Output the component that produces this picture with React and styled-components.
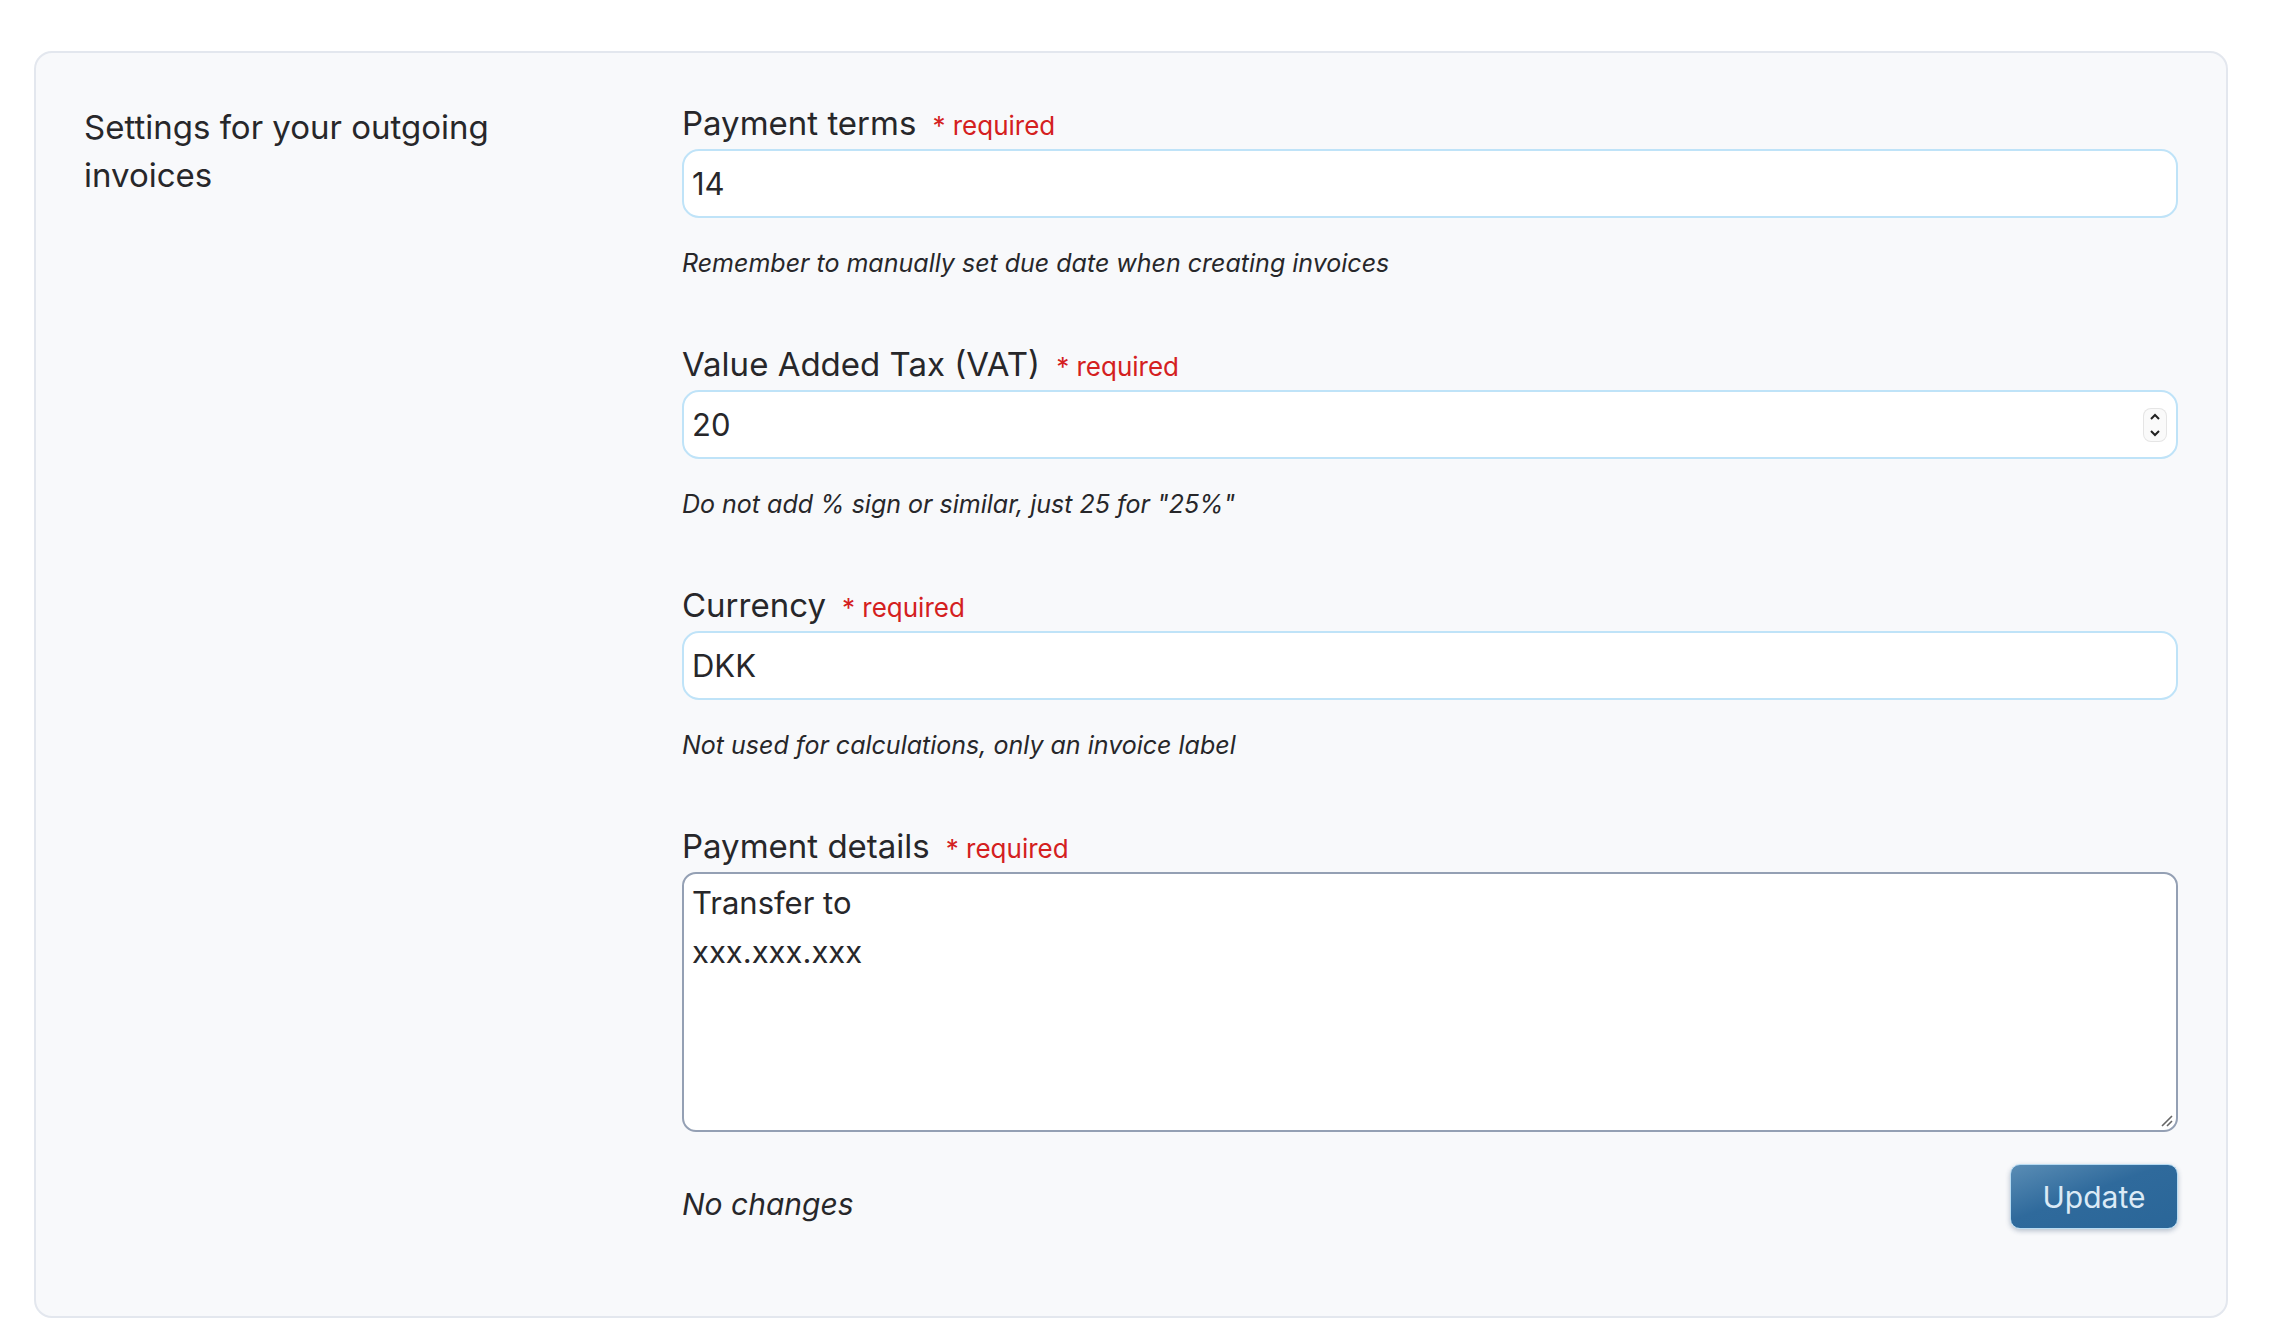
import React from "react";
import styled, {createGlobalStyle} from "styled-components";

const Global = createGlobalStyle`
  body { margin: 0; background: #fff; font-family: Inter, "Noto Sans", sans-serif; color: #27272a; }
`;

const Card = styled.div`
  margin: 51px 40px 0 34px;
  width: 2194px;
  box-sizing: border-box;
  height: 1267px;
  background: #f8f9fb;
  border: 2px solid #e3e7ee;
  border-radius: 18px;
  padding: 50px 48px 0 48px;
  display: grid;
  grid-template-columns: 598px 1fr;
`;

const Title = styled.div`
  font-size: 33px;
  line-height: 48px;
  width: 440px;
`;

const Fields = styled.div`
  display: flex;
  flex-direction: column;
`;

const Field = styled.div`
  display: flex;
  flex-direction: column;
  margin-bottom: ${p => p.gap || 0}px;
`;

const Label = styled.div`
  display: flex;
  align-items: baseline;
  gap: 16px;
  font-size: 33px;
  height: 46px;
`;

const Req = styled.span`
  color: #d42020;
  font-size: 26px;
`;

const InputBox = styled.div`
  height: 69px;
  box-sizing: border-box;
  background: #fff;
  border: 2px solid #bfe3f8;
  border-radius: 17px;
  display: flex;
  align-items: center;
  justify-content: space-between;
  padding: 0 10px 0 8px;
  font-size: 31px;
`;

const Spinner = styled.div`
  width: 22px;
  height: 32px;
  border-radius: 7px;
  background: #fafafa;
  box-shadow: 0 0 0 1px #e5e5e5;
  display: flex;
  flex-direction: column;
  align-items: center;
  justify-content: space-around;
`;

const Help = styled.div`
  font-style: italic;
  font-size: 25px;
  margin-top: 30px;
  height: 36px;
`;

const TextArea = styled.div`
  height: 260px;
  box-sizing: border-box;
  background: #fff;
  border: 2px solid #94a0b4;
  border-radius: 14px;
  padding: 4px 8px;
  font-size: 31px;
  line-height: 49px;
  position: relative;
`;

const Grip = styled.svg`
  position: absolute;
  right: 3px;
  bottom: 3px;
`;

const Footer = styled.div`
  display: flex;
  justify-content: space-between;
  align-items: flex-start;
  margin-top: 50px;
`;

const Status = styled.div`
  font-style: italic;
  font-size: 30px;
  margin-top: 4px;
`;

const Button = styled.button`
  width: 168px;
  height: 65px;
  border-radius: 10px;
  border: 1px solid #b8dcf3;
  background: linear-gradient(160deg, #5a8db5 0%, #2f6a9c 45%, #2a6698 100%);
  color: #dbeaf6;
  font: 30px Inter, "Noto Sans", sans-serif;
  box-shadow: 0 2px 5px rgba(30, 60, 100, 0.3);
  margin-top: -18px;
`;

const Chev = ({up}) => (
  <svg width="12" height="8" viewBox="0 0 12 8">
    <path d={up ? "M2 6 L6 2 L10 6" : "M2 2 L6 6 L10 2"} fill="none" stroke="#222" strokeWidth="2"/>
  </svg>
);

const fields = [
  {label: "Payment terms", value: "14", help: "Remember to manually set due date when creating invoices"},
  {label: "Value Added Tax (VAT)", value: "20", help: "Do not add % sign or similar, just 25 for \"25%\"", number: true},
  {label: "Currency", value: "DKK", help: "Not used for calculations, only an invoice label"},
];

export default function App() {
  return <>
    <Global/>
    <Card>
      <Title>Settings for your outgoing invoices</Title>
      <Fields>
        {fields.map(f => (
          <Field key={f.label} gap={60}>
            <Label>{f.label}<Req>* required</Req></Label>
            <InputBox>
              <span>{f.value}</span>
              {f.number && <Spinner><Chev up/><Chev/></Spinner>}
            </InputBox>
            <Help>{f.help}</Help>
          </Field>
        ))}
        <Field>
          <Label>Payment details<Req>* required</Req></Label>
          <TextArea>
            Transfer to<br/>xxx.xxx.xxx
            <Grip width="14" height="14" viewBox="0 0 14 14">
              <path d="M13 3 L3 13 M13 8 L8 13" stroke="#666" strokeWidth="1.6"/>
            </Grip>
          </TextArea>
        </Field>
        <Footer>
          <Status>No changes</Status>
          <Button>Update</Button>
        </Footer>
      </Fields>
    </Card>
  </>;
}
